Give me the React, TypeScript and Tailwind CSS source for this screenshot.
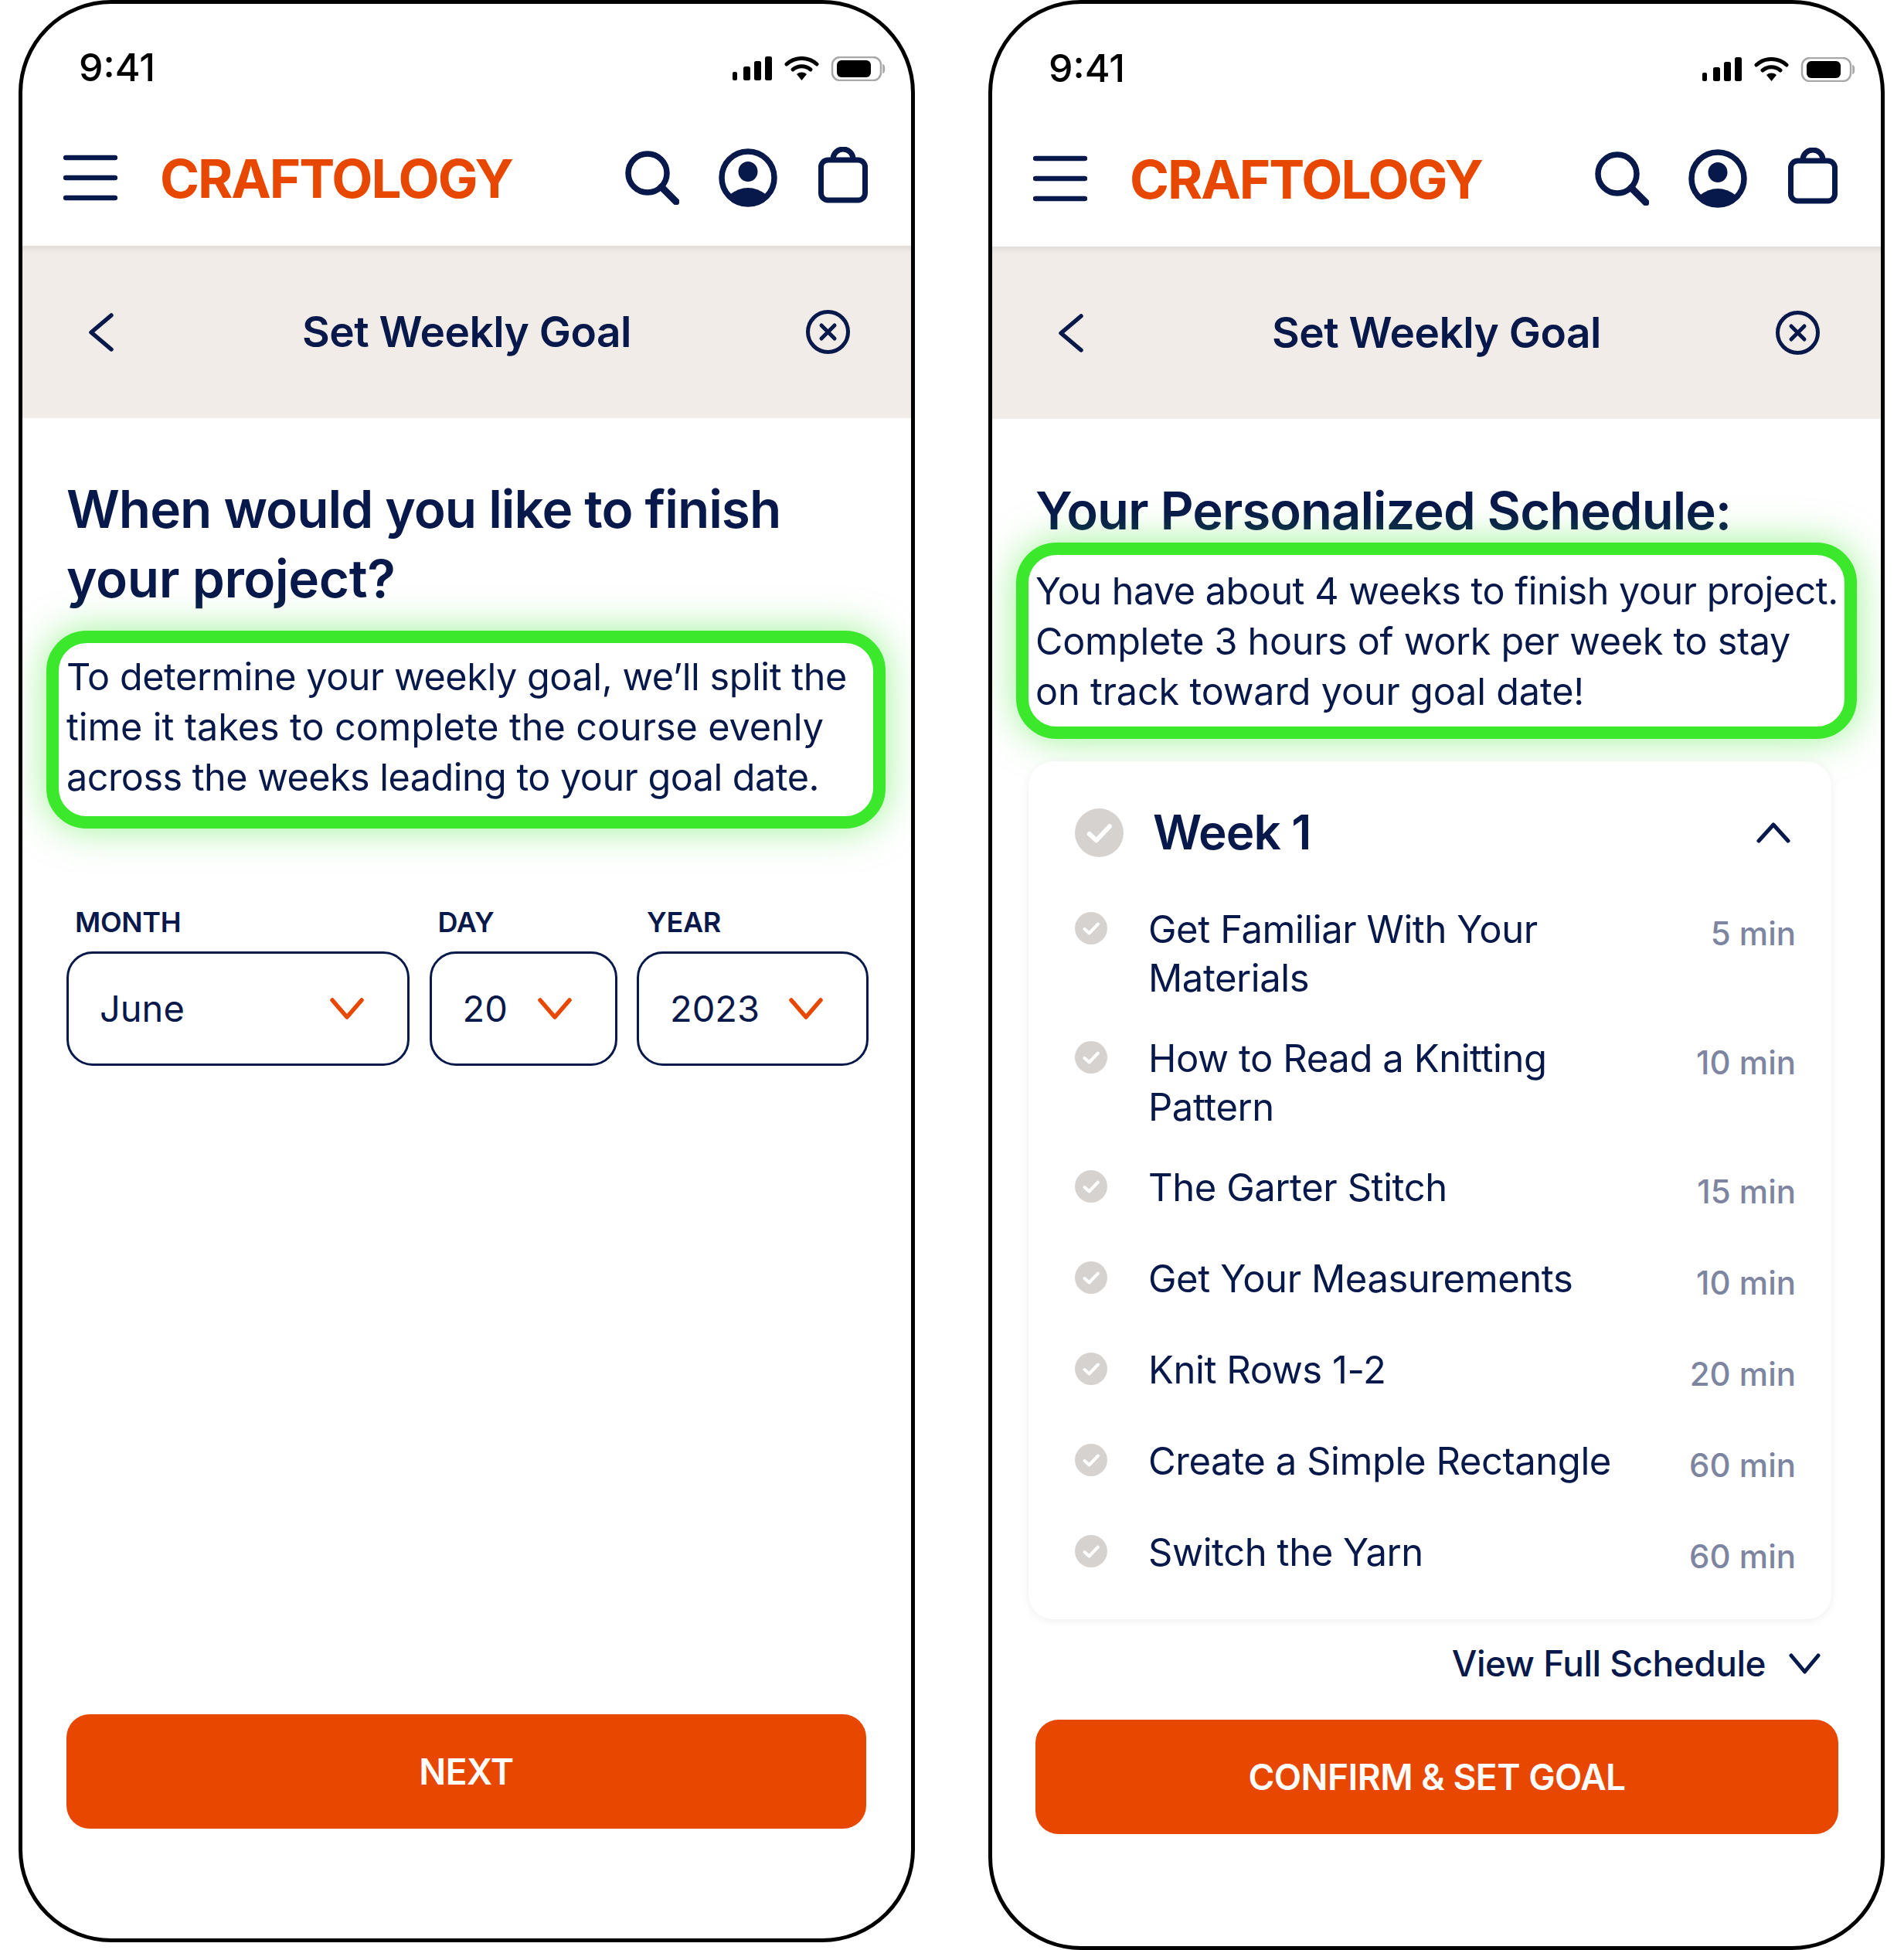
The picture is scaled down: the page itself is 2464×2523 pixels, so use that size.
import React from "react";

const NAVY = "#07184a";

function StatusIcons() {
  return (
    <svg width="198" height="32" viewBox="0 0 198 32" fill="none">
      <rect x="0" y="20" width="6" height="11" rx="2" fill="#000" />
      <rect x="14" y="13" width="9" height="18" rx="2.5" fill="#000" />
      <rect x="28" y="6" width="9" height="25" rx="2.5" fill="#000" />
      <rect x="42" y="0" width="9" height="31" rx="2.5" fill="#000" />
      <path d="M70 10A29 29 0 0 1 109 10" stroke="#000" strokeWidth="5" strokeLinecap="round" />
      <path d="M78 17A18 18 0 0 1 101 17" stroke="#000" strokeWidth="5" strokeLinecap="round" />
      <path d="M83 23A10 10 0 0 1 96 23L89.5 31Z" fill="#000" />
      <rect x="129" y="1" width="63" height="30" rx="10" stroke="#a8a8a8" strokeWidth="2.5" />
      <rect x="135" y="5" width="44" height="22" rx="6" fill="#000" />
      <path d="M195 11C197 12 197 20 195 21Z" fill="#a8a8a8" stroke="#a8a8a8" strokeWidth="1.5" />
    </svg>
  );
}

function Hamburger() {
  return (
    <svg width="70" height="60" viewBox="0 0 70 60" fill="none" stroke={NAVY} strokeWidth="6.5" strokeLinecap="round">
      <path d="M3 4H67M3 30H67M3 56H67" />
    </svg>
  );
}

function Search() {
  return (
    <svg width="70" height="70" viewBox="0 0 70 70" fill="none" stroke={NAVY} strokeLinecap="round">
      <circle cx="29" cy="29" r="25" strokeWidth="7.5" />
      <path d="M47 47L66 66" strokeWidth="9" />
    </svg>
  );
}

function Profile() {
  return (
    <svg width="76" height="76" viewBox="0 0 76 76" fill="none">
      <circle cx="38" cy="38" r="34" stroke={NAVY} strokeWidth="7.5" />
      <ellipse cx="38" cy="30" rx="12.5" ry="13" fill={NAVY} />
      <path d="M14 60Q38 42 62 60A34 34 0 0 1 14 60Z" fill={NAVY} />
    </svg>
  );
}

function Bag() {
  return (
    <svg width="64" height="73" viewBox="0 0 64 73" fill="none" stroke={NAVY} strokeWidth="7">
      <rect x="3.5" y="17" width="57" height="52" rx="9" />
      <path d="M19 16A13 13 0 0 1 45 16" />
    </svg>
  );
}

function CircleX() {
  return (
    <svg width="57" height="57" viewBox="0 0 57 57" fill="none" stroke={NAVY} strokeWidth="5" strokeLinecap="round">
      <circle cx="28.5" cy="28.5" r="26" />
      <path d="M20 20L37 37M37 20L20 37" />
    </svg>
  );
}

function Chevron({ dir, color, w, h, sw }: { dir: "left" | "down" | "up"; color: string; w: number; h: number; sw: number }) {
  const d =
    dir === "left"
      ? `M${w - 3} 3L3 ${h / 2}L${w - 3} ${h - 3}`
      : dir === "down"
      ? `M3 3L${w / 2} ${h - 3}L${w - 3} 3`
      : `M3 ${h - 3}L${w / 2} 3L${w - 3} ${h - 3}`;
  return (
    <svg width={w} height={h} viewBox={`0 0 ${w} ${h}`} fill="none" stroke={color} strokeWidth={sw} strokeLinecap="round" strokeLinejoin="round">
      <path d={d} />
    </svg>
  );
}

function Check({ size }: { size: number }) {
  return (
    <svg width={size} height={size} viewBox="0 0 42 42" className="shrink-0">
      <circle cx="21" cy="21" r="21" fill="#d6d2cf" />
      <path d="M12.5 22L18.5 27.5L30 15.5" fill="none" stroke="#fff" strokeWidth="4" strokeLinecap="round" strokeLinejoin="round" />
    </svg>
  );
}

function Top() {
  return (
    <>
      <div className="h-[173px] shrink-0 flex items-start justify-between pl-[73px] pr-[33px] pt-[55px]">
        <span className="font-['Inter'] text-[50px] leading-[54px] font-medium text-black">9:41</span>
        <div className="pt-[13px]">
          <StatusIcons />
        </div>
      </div>
      <div className="h-[140px] shrink-0 flex items-center pl-[53px] pr-[56px] pb-[36px]">
        <Hamburger />
        <span className="ml-[55px] mt-[2px] font-['Inter'] text-[69px] leading-[80px] font-bold tracking-[-2px] text-[#e84700]">CRAFTOLOGY</span>
        <div className="ml-auto flex items-center gap-[51px]">
          <Search />
          <Profile />
          <div className="ml-[2px] mb-[8px]">
            <Bag />
          </div>
        </div>
      </div>
      <div className="h-[223px] shrink-0 flex items-center justify-between bg-[#f1ece8] pl-[86px] pr-[79px] shadow-[inset_0_8px_8px_-5px_rgba(0,0,0,0.09)]">
        <div className="w-[50px]">
          <Chevron dir="left" color={NAVY} w={32} h={50} sw={5.5} />
        </div>
        <span className="mb-[2px] font-['Inter'] text-[55px] leading-[64px] font-semibold tracking-[-0.5px] text-[#07184a]">Set Weekly Goal</span>
        <CircleX />
      </div>
    </>
  );
}

function Select({ w, label, value, labelPad }: { w: string; label: string; value: string; labelPad: string }) {
  return (
    <div className={`flex flex-col gap-[16px] shrink-0 ${w}`}>
      <span className={`pt-[1px] -mb-[1px] font-['Inter'] text-[36px] leading-[46px] font-semibold tracking-[-0.3px] text-[#07184a] ${labelPad}`}>{label}</span>
      <div className="h-[148px] rounded-[34px] border-[3px] border-[#07184a] flex items-center justify-between pl-[40px] pr-[56px]">
        <span className="font-['Inter'] text-[47px] leading-[60px] text-[#07184a]">{value}</span>
        <Chevron dir="down" color="#e84700" w={44} h={28} sw={5.5} />
      </div>
    </div>
  );
}

const rows: { t: React.ReactNode; d: string; pb: string }[] = [
  { t: <>Get Familiar With Your<br />Materials</>, d: "5 min", pb: "pb-[41px]" },
  { t: <>How to Read a Knitting<br />Pattern</>, d: "10 min", pb: "pb-[41px]" },
  { t: "The Garter Stitch", d: "15 min", pb: "pb-[55px]" },
  { t: "Get Your Measurements", d: "10 min", pb: "pb-[55px]" },
  { t: "Knit Rows 1-2", d: "20 min", pb: "pb-[55px]" },
  { t: "Create a Simple Rectangle", d: "60 min", pb: "pb-[55px]" },
  { t: "Switch the Yarn", d: "60 min", pb: "pb-[55px]" },
];

function LeftPhone() {
  return (
    <div className="w-[1160px] h-[2513px] shrink-0 flex flex-col bg-white border-[5px] border-black rounded-[120px] overflow-hidden">
      <Top />
      <div className="flex-1 flex flex-col pl-[57px] pr-[54px] pb-[142px]">
        <h1 className="pt-[74px] font-['Inter'] text-[67.5px] leading-[90px] font-semibold text-[#07184a]">
          <span className="block -mt-[1px] tracking-[-1px]">When would you like to finish</span>
          <span className="block mb-[1px] tracking-[-0.4px]">your project?</span>
        </h1>
        <div className="mt-[21px] -ml-[26px] w-[1086px] h-[256px] shrink-0 border-[16px] border-[#3be82b] rounded-[52px] bg-white pl-[10px] pt-[11px] shadow-[0_0_50px_rgba(59,232,43,0.5)] font-['Inter'] text-[48.5px] leading-[65px] text-[#07184a] whitespace-nowrap">
          <span className="block tracking-[-0.42px]">To determine your weekly goal, we’ll split the</span>
          <span className="block tracking-[-0.04px]">time it takes to complete the course evenly</span>
          <span className="block tracking-[-0.51px]">across the weeks leading to your goal date.</span>
        </div>
        <div className="mt-[97px] flex gap-[25.5px]">
          <Select w="w-[444px]" label="MONTH" value="June" labelPad="pl-[11px]" />
          <Select w="w-[243px]" label="DAY" value="20" labelPad="pl-[11px]" />
          <Select w="w-[300px]" label="YEAR" value="2023" labelPad="pl-[13px]" />
        </div>
        <div className="mt-auto h-[148px] w-[1035px] rounded-[30px] bg-[#e84700] flex items-center justify-center font-['Inter'] text-[46px] font-semibold tracking-[-0.5px] text-white">NEXT</div>
      </div>
    </div>
  );
}

function RightPhone() {
  return (
    <div className="w-[1160px] h-[2523px] shrink-0 flex flex-col bg-white border-[5px] border-black rounded-[120px] overflow-hidden">
      <div className="pt-[1px] flex flex-col">
        <Top />
      </div>
      <div className="flex-1 flex flex-col pl-[56px] pr-[55px] pb-[145px]">
        <h1 className="pt-[74px] font-['Inter'] text-[67px] leading-[90px] font-semibold tracking-[-1px] text-[#07184a]">Your Personalized Schedule:</h1>
        <div className="-mt-[4px] -ml-[25px] w-[1088px] h-[254px] shrink-0 border-[16px] border-[#3be82b] rounded-[52px] bg-white pl-[9px] pt-[14px] shadow-[0_0_50px_rgba(59,232,43,0.5)] font-['Inter'] text-[48.5px] leading-[65px] text-[#07184a] whitespace-nowrap">
          <span className="block tracking-[-0.47px]">You have about 4 weeks to finish your project.</span>
          <span className="block tracking-[-0.28px]">Complete 3 hours of work per week to stay</span>
          <span className="block tracking-[-0.14px]">on track toward your goal date!</span>
        </div>
        <div className="mt-[29px] -ml-[9px] w-[1039px] shrink-0 rounded-[32px] bg-white shadow-[0_2px_12px_rgba(0,0,0,0.07)] pt-[60px] pl-[60px] pr-[46px]">
          <div className="h-[64px] flex items-center">
            <Check size={63} />
            <span className="ml-[38px] font-['Inter'] text-[62px] leading-[64px] font-semibold tracking-[-1px] text-[#07184a]">Week 1</span>
            <div className="ml-auto mr-[7px]">
              <Chevron dir="up" color={NAVY} w={44} h={27} sw={5} />
            </div>
          </div>
          <div className="mt-[62px] flex flex-col">
            {rows.map((r, i) => (
              <div key={i} className={`flex items-start ${r.pb}`}>
                <div className="pt-[9px]">
                  <Check size={42} />
                </div>
                <span className="ml-[53px] font-['Inter'] text-[49px] leading-[63px] tracking-[-0.45px] text-[#07184a] whitespace-nowrap">{r.t}</span>
                <span className="ml-auto pt-[10px] font-['Inter'] text-[42px] leading-[53px] font-medium text-[#7d85a0] whitespace-nowrap">{r.d}</span>
              </div>
            ))}
          </div>
        </div>
        <div className="mt-[28px] mr-[23px] h-[58px] flex items-center justify-end gap-[30px]">
          <span className="font-['Inter'] text-[46px] leading-[58px] font-medium tracking-[-0.5px] text-[#07184a]">View Full Schedule</span>
          <Chevron dir="down" color={NAVY} w={41} h={27} sw={5} />
        </div>
        <div className="mt-auto h-[148px] w-[1039px] rounded-[30px] bg-[#e84700] flex items-center justify-center font-['Inter'] text-[46px] font-semibold tracking-[-0.5px] text-white">CONFIRM &amp; SET GOAL</div>
      </div>
    </div>
  );
}

export default function App() {
  return (
    <div className="w-[2464px] h-[2523px] bg-white flex items-start pl-[24px] gap-[95px] overflow-hidden">
      <LeftPhone />
      <RightPhone />
    </div>
  );
}
